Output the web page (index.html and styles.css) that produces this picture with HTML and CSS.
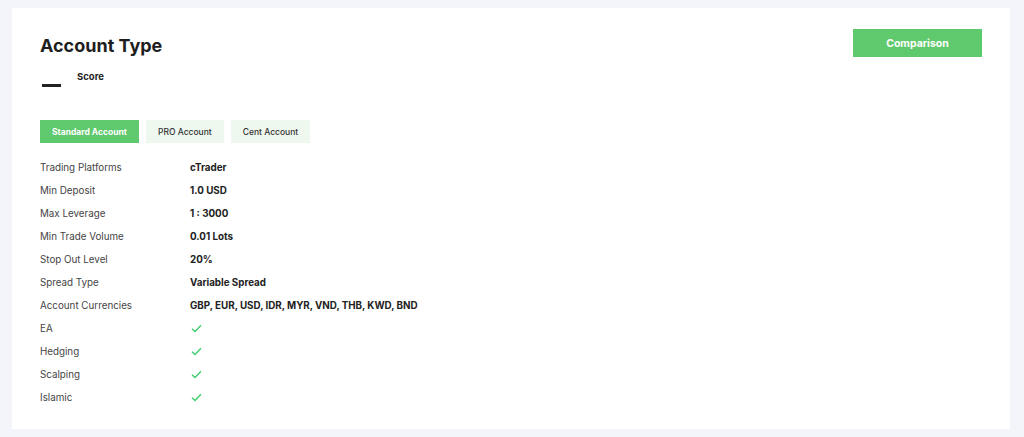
FILE: index.html
```html
<!DOCTYPE html>
<html lang="en">
<head>
    <meta charset="UTF-8">
    <meta name="viewport" content="width=device-width, initial-scale=1.0">
    <title>Account Type</title>
    <link rel="stylesheet" href="styles.css">
</head>
<body>
    <main class="card">
        <div class="card-head">
            <div>
                <h1>Account Type</h1>
                <div class="score">
                    <span class="score-dash"></span>
                    <span class="score-label">Score</span>
                </div>
            </div>
            <button class="compare-btn">Comparison</button>
        </div>

        <div class="tabs">
            <button class="tab active">Standard Account</button>
            <button class="tab">PRO Account</button>
            <button class="tab">Cent Account</button>
        </div>

        <table class="specs">
            <tr><td>Trading Platforms</td><td>cTrader</td></tr>
            <tr><td>Min Deposit</td><td>1.0 USD</td></tr>
            <tr><td>Max Leverage</td><td>1 : 3000</td></tr>
            <tr><td>Min Trade Volume</td><td>0.01 Lots</td></tr>
            <tr><td>Stop Out Level</td><td>20%</td></tr>
            <tr><td>Spread Type</td><td>Variable Spread</td></tr>
            <tr><td>Account Currencies</td><td>GBP, EUR, USD, IDR, MYR, VND, THB, KWD, BND</td></tr>
            <tr><td>EA</td><td><svg class="check" viewBox="0 0 12 10"><path d="M1 5.2 4.3 8.3 11 1.5"/></svg></td></tr>
            <tr><td>Hedging</td><td><svg class="check" viewBox="0 0 12 10"><path d="M1 5.2 4.3 8.3 11 1.5"/></svg></td></tr>
            <tr><td>Scalping</td><td><svg class="check" viewBox="0 0 12 10"><path d="M1 5.2 4.3 8.3 11 1.5"/></svg></td></tr>
            <tr><td>Islamic</td><td><svg class="check" viewBox="0 0 12 10"><path d="M1 5.2 4.3 8.3 11 1.5"/></svg></td></tr>
        </table>
    </main>
</body>
</html>
```

FILE: styles.css
```css
body {
    margin: 0;
    padding: 8px 14px 8px 12px;
    background-color: #f4f5fa;
    font-family: Inter, "Open Sans", sans-serif;
    color: #222;
}

.card {
    background-color: #fff;
    height: 421px;
    box-sizing: border-box;
    padding: 21px 28px 0 28px;
}

.card-head {
    display: flex;
    justify-content: space-between;
    align-items: flex-start;
}

h1 {
    margin: 3px 0 0 0;
    font-size: 18px;
    font-weight: 700;
    line-height: 28px;
    color: #1e1e1e;
}

.score {
    display: flex;
    align-items: flex-start;
    margin-top: 11px;
}

.score-dash {
    display: inline-block;
    width: 19px;
    height: 3px;
    background-color: #222;
    margin: 13px 0 0 2px;
}

.score-label {
    font-size: 9.5px;
    font-weight: 700;
    margin-left: 16px;
    line-height: 12px;
}

.compare-btn {
    margin: 0;
    width: 129px;
    height: 28px;
    border: none;
    background-color: #5fc96d;
    color: #fff;
    font-family: inherit;
    font-size: 10.5px;
    font-weight: 700;
}

.tabs {
    display: flex;
    gap: 7px;
    margin-top: 33px;
}

.tab {
    height: 23px;
    border: none;
    background-color: #eef8ef;
    color: #333;
    font-family: inherit;
    font-size: 8.5px;
    font-weight: 500;
    padding: 0 12px;
}

.tab.active {
    background-color: #5fc96d;
    color: #fff;
    font-weight: 700;
}

.specs {
    border-collapse: collapse;
    margin-top: 13px;
    font-size: 9.8px;
}

.specs td {
    height: 23px;
    padding: 0;
    vertical-align: middle;
}

.specs td:first-child {
    width: 150px;
    color: #444;
}

.specs td:last-child {
    font-weight: 700;
    color: #222;
}

.check {
    display: block;
    width: 11px;
    height: 9px;
    margin-left: 1px;
    fill: none;
    stroke: #3ecf6e;
    stroke-width: 1.6;
}
```
